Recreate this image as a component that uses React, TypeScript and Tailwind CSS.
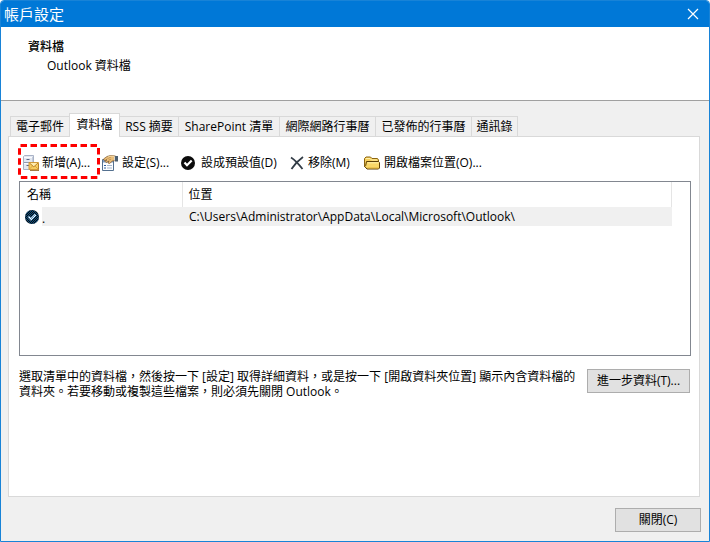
import { useState } from 'react';

type TabItem = {
  id: string;
  label: string;
  width: string;
};

const tabs: TabItem[] = [
  { id: 'email', label: '電子郵件', width: 'w-[60px]' },
  { id: 'files', label: '資料檔', width: 'w-[51px]' },
  { id: 'rss', label: 'RSS 摘要', width: 'w-[60px]' },
  { id: 'sharepoint', label: 'SharePoint 清單', width: 'w-[102px]' },
  { id: 'internet', label: '網際網路行事曆', width: 'w-[97px]' },
  { id: 'published', label: '已發佈的行事曆', width: 'w-[97px]' },
  { id: 'contacts', label: '通訊錄', width: 'w-[47px]' },
];

function AddFileIcon() {
  return (
    <svg className="shrink-0" width="16" height="16" viewBox="0 0 16 16">
      <path d="M.5 1.500l1-1h9v13l-1 1h-9z" fill="#e3e8f1" stroke="#a9b2c6" />
      <path d="M9.500 2v12" stroke="#c3cbdb" />
      <path d="M1 7.500h8" stroke="#8d99b4" />
      <path d="M1 2.500h8M1 8.500h8" stroke="#fbfcff" />
      <path d="M3.500 4.500h3M3.500 10.500h3" stroke="#5a6785" />
      <path d="M6 7.500h9.500v7H6z" fill="#f6cd62" stroke="#d09a3a" />
      <path d="M6.500 8h8.500l-4.200 3.800z" fill="#ffedb0" />
      <path d="M6.500 8l4.300 3.800L15 8" fill="none" stroke="#b77a1c" strokeWidth=".9" />
      <path d="M6.500 14l3-3M15 14l-3-3" stroke="#d09a3a" strokeWidth=".8" />
      <path d="M7 15.500h9V9" fill="none" stroke="#8b5a14" strokeWidth=".8" />
    </svg>
  );
}

function SettingsIcon() {
  return (
    <svg className="shrink-0" width="16" height="16" viewBox="0 0 16 16">
      <path d="M.5 4.500h11v11H.5z" fill="#fdfeff" stroke="#54708f" />
      <path d="M1 5h10v2.500H1z" fill="#7d9bc4" />
      <path d="M2 10.500h2M2 13h2" stroke="#2f5f9e" strokeWidth="1.200" />
      <path d="M5 10.500h5M5 13h5" stroke="#a5b5ca" />
      <path
        d="M1.500 4L5 1.500 8.500.500l5 .500v4.500l-3 .500L7.500 8.500 6 8l1-1.800L4 7.500 3 6.500l2-1.800-2.500 1z"
        fill="#e9bd78"
        stroke="#7c5526"
        strokeWidth=".7"
      />
      <path d="M5.500 3.500L9 2M6.500 5.200l2.500-1" stroke="#b58140" strokeWidth=".7" />
      <path d="M6 2l3-.800 3 .300" fill="none" stroke="#fbe2ae" strokeWidth=".8" />
      <path d="M13 1h3v5.500h-3z" fill="#4c5f70" />
      <path d="M12.500 1.500v4" stroke="#d8dde2" strokeWidth=".8" />
    </svg>
  );
}

function CheckIcon({ selected = false }: { selected?: boolean }) {
  return (
    <svg className="shrink-0" width="14" height="14" viewBox="0 0 14 14">
      {selected && (
        <defs>
          <pattern id="stipple" width="2" height="2" patternUnits="userSpaceOnUse">
            <path d="M0 0h1v1H0zM1 1h1v1H1z" fill="#0a6cb8" />
          </pattern>
        </defs>
      )}
      <circle cx="7" cy="7" r="7" fill="#0b0b0b" />
      <path d="M3.500 6.500L6 9.200l4.700-4.700" fill="none" stroke="#fff" strokeWidth="2.200" />
      {selected && <circle cx="7" cy="7" r="7" fill="url(#stipple)" opacity=".7" />}
    </svg>
  );
}

function RemoveIcon() {
  return (
    <svg className="shrink-0" width="14" height="14" viewBox="0 0 14 14">
      <path d="M1 1.500C5 4 9 8.500 12.500 13" fill="none" stroke="#333d47" strokeWidth="1.800" />
      <path d="M13 1C8 4.500 4.500 8.500 1.500 13" fill="none" stroke="#333d47" strokeWidth="1.800" />
    </svg>
  );
}

function FolderIcon() {
  return (
    <svg className="shrink-0" width="16" height="14" viewBox="0 0 16 14">
      <path d="M.5 10.500v-8L2 1h4.500L8 2.500h5.500L14.500 4v3z" fill="#f6cf5e" stroke="#8a6411" />
      <path d="M2 2.500h4L7.500 4H13" fill="none" stroke="#fff0a8" />
      <path d="M2.500 5.500h12l1 1V12l-1 1H3L.7 10.500l1-1z" fill="#f9d768" stroke="#5a3e06" />
      <path d="M3.500 6.800h11" stroke="#fff1ad" />
      <path d="M3.500 12h11" stroke="#dba833" strokeWidth=".8" />
    </svg>
  );
}

function CloseIcon() {
  return (
    <svg width="12" height="12" viewBox="0 0 12 12">
      <path d="M1 1l10 10M11 1L1 11" stroke="#fff" strokeWidth="1.200" />
    </svg>
  );
}

function Toolbar() {
  return (
    <div className="flex h-9 items-center text-xs whitespace-nowrap">
      <button className="relative flex w-20 items-center gap-[3px] pl-1">
        <AddFileIcon />
        新增(A)...
        <svg
          className="absolute -top-[11px] -left-px"
          width="82"
          height="35"
          viewBox="0 0 82 35"
        >
          <rect
            x="1.500"
            y="1.500"
            width="79"
            height="32"
            rx="1"
            fill="none"
            stroke="#fe0000"
            strokeWidth="3"
            strokeDasharray="6.500 3.500"
          />
        </svg>
      </button>
      <button className="ml-[3px] flex w-[79px] items-center gap-1">
        <SettingsIcon />
        設定(S)...
      </button>
      <button className="flex w-[109px] items-center gap-1.5">
        <CheckIcon />
        設成預設值(D)
      </button>
      <button className="flex w-[74px] items-center gap-1">
        <RemoveIcon />
        移除(M)
      </button>
      <button className="flex items-center gap-1">
        <FolderIcon />
        開啟檔案位置(O)...
      </button>
    </div>
  );
}

function FileList() {
  return (
    <div className="h-[175px] border border-[#828790] pr-[18px]">
      <table className="w-full table-fixed text-xs">
        <thead>
          <tr className="h-[25px]">
            <th className="w-[162px] border-r border-[#e5e5e5] pl-[7px] text-left font-normal">
              名稱
            </th>
            <th className="border-r border-[#e5e5e5] pl-1.5 text-left font-normal">位置</th>
          </tr>
        </thead>
        <tbody>
          <tr className="h-[19px]">
            <td className="p-0">
              <div className="flex h-[19px] items-center gap-[3px] pl-[5px]">
                <CheckIcon selected />
                <span className="h-full flex-1 bg-[#f0f0f0] leading-6">.</span>
              </div>
            </td>
            <td className="bg-[#f0f0f0] py-0 pl-[7px]">
              C:\Users\Administrator\AppData\Local\Microsoft\Outlook\
            </td>
          </tr>
        </tbody>
      </table>
    </div>
  );
}

function App() {
  const [active, setActive] = useState('files');

  return (
    <div className="flex min-h-screen flex-col overflow-hidden rounded-t-[4px] border border-[#1883d7] bg-[#f0f0f0] font-['Open_Sans','Noto_Sans_CJK_TC',sans-serif] text-xs text-black">
      <header className="flex h-[26px] items-center justify-between bg-[#0078d7] pr-2.5 pl-[3px] text-white">
        <h1 className="text-[15px] leading-5">帳戶設定</h1>
        <button aria-label="關閉視窗">
          <CloseIcon />
        </button>
      </header>

      <section className="h-[74px] border-b border-[#a0a0a0] bg-white pt-2.5 pl-[27px]">
        <h2 className="leading-[19px] font-medium">資料檔</h2>
        <p className="pl-[19px] leading-[19px]">Outlook 資料檔</p>
      </section>

      <main className="flex flex-1 flex-col pt-3 pr-[9px] pl-[7px]">
        <div role="tablist" className="flex items-end pl-0.5">
          {tabs.map((tab) => (
            <button
              key={tab.id}
              role="tab"
              aria-selected={tab.id === active}
              onClick={() => setActive(tab.id)}
              className={`${tab.width} -mr-px shrink-0 border border-b-0 border-[#d9d9d9] text-center whitespace-nowrap ${
                tab.id === active ? 'relative -mb-px h-6 bg-white pb-0.5' : 'h-5'
              }`}
            >
              {tab.label}
            </button>
          ))}
        </div>

        <div
          role="tabpanel"
          className="flex-1 border border-[#d9d9d9] bg-white px-2.5 pt-2 pr-2"
        >
          <Toolbar />
          <FileList />
          <div className="flex items-start justify-between pt-[13px] pr-px">
            <p className="leading-[15px]">
              選取清單中的資料檔，然後按一下 [設定] 取得詳細資料，或是按一下 [開啟資料夾位置] 顯示內含資料檔的
              <br />
              資料夾。若要移動或複製這些檔案，則必須先關閉 Outlook。
            </p>
            <button className="h-6 w-[103px] shrink-0 border border-[#adadad] bg-[#e1e1e1]">
              進一步資料(T)...
            </button>
          </div>
        </div>
      </main>

      <footer className="flex justify-end pt-[11px] pr-2 pb-[9px]">
        <button className="h-6 w-[86px] border border-[#adadad] bg-[#e1e1e1]">關閉(C)</button>
      </footer>
    </div>
  );
}

export default App;
